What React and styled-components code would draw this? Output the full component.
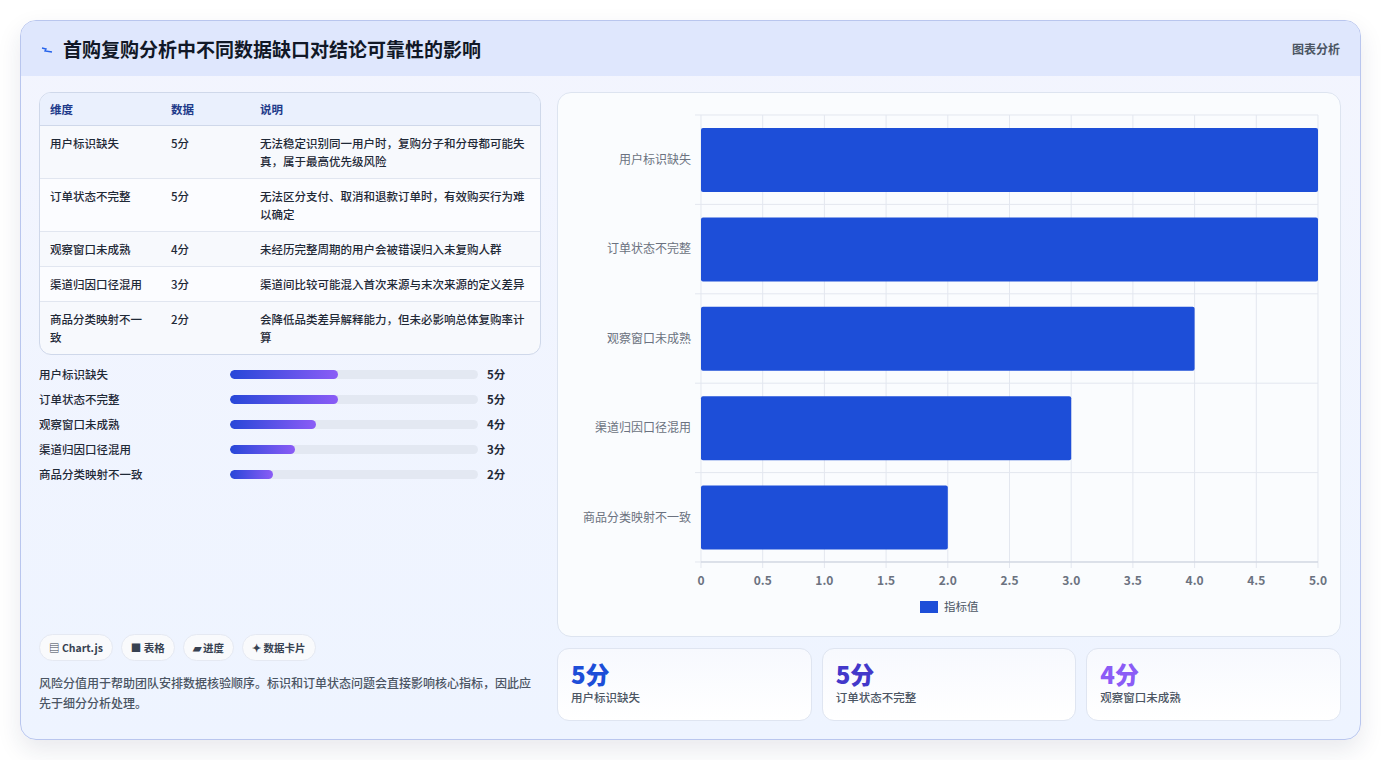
import React from "react";
import styled, { createGlobalStyle } from "styled-components";

const Global = createGlobalStyle`
  body { margin: 0; background: #fff; font-family: "Noto Sans CJK SC", "Noto Sans", sans-serif; }
`;

const rows = [
  { name: "用户标识缺失", score: 5, desc: "无法稳定识别同一用户时，复购分子和分母都可能失真，属于最高优先级风险" },
  { name: "订单状态不完整", score: 5, desc: "无法区分支付、取消和退款订单时，有效购买行为难以确定" },
  { name: "观察窗口未成熟", score: 4, desc: "未经历完整周期的用户会被错误归入未复购人群" },
  { name: "渠道归因口径混用", score: 3, desc: "渠道间比较可能混入首次来源与末次来源的定义差异" },
  { name: "商品分类映射不一致", score: 2, desc: "会降低品类差异解释能力，但未必影响总体复购率计算" },
];

const Page = styled.div`
  padding: 20px 20px 20px 20px;
`;
const Card = styled.div`
  height: 718px;
  border: 1px solid #b9c6ee;
  border-radius: 16px;
  background: linear-gradient(180deg, #f3f5fe, #eef4ff);
  box-shadow: 0 10px 24px rgba(30, 40, 80, 0.1);
  overflow: hidden;
  display: flex;
  flex-direction: column;
`;
const Header = styled.div`
  height: 56px;
  background: #dfe7fd;
  display: flex;
  align-items: center;
  justify-content: space-between;
  padding: 0 20px;
`;
const Title = styled.h1`
  margin: 0;
  font-size: 19px;
  font-weight: 700;
  color: #111827;
  display: flex;
  align-items: center;
  gap: 10px;
`;
const Tag = styled.span`
  font-size: 12px;
  color: #4b5563;
  font-weight: 600;
`;
const Body = styled.div`
  flex: 1;
  display: grid;
  grid-template-columns: 502px 784px;
  gap: 16px;
  padding: 16px 18px 18px 18px;
`;
const Left = styled.div`
  display: flex;
  flex-direction: column;
`;
const Table = styled.table`
  width: 100%;
  border-collapse: separate;
  border-spacing: 0;
  border: 1px solid #cfd8ea;
  border-radius: 12px;
  overflow: hidden;
  font-size: 11.5px;
  background: #f7f9fd;
  th {
    text-align: left;
    color: #1e3a8a;
    font-weight: 600;
    height: 32px;
    padding: 0 10px;
    background: #eaf0fd;
    border-bottom: 1px solid #cfd8ea;
  }
  td {
    padding: 8px 10px 8px 10px;
    color: #1f2937;
    line-height: 18px;
    vertical-align: top;
    border-bottom: 1px solid #e1e6f0;
    font-weight: 500;
  }
  tr:nth-child(even) td { background: #fbfcff; }
  tr:last-child td { border-bottom: none; }
`;
const Bars = styled.div`
  margin-top: 10px;
  display: flex;
  flex-direction: column;
  gap: 7px;
`;
const BarRow = styled.div`
  display: grid;
  grid-template-columns: 182px 248px auto;
  align-items: center;
  gap: 9px;
  font-size: 11.5px;
  color: #1f2937;
  font-weight: 500;
  height: 18px;
  b { font-weight: 700; }
`;
const Track = styled.div`
  height: 9px;
  border-radius: 5px;
  background: #e3e8f2;
  overflow: hidden;
`;
const Fill = styled.div`
  height: 100%;
  border-radius: 5px;
  background: linear-gradient(90deg, #2747d8, #8b5cf6);
`;
const Chips = styled.div`
  margin-top: auto;
  display: flex;
  gap: 8px;
`;
const Chip = styled.span`
  font-size: 10.5px;
  font-weight: 700;
  color: #374151;
  background: #f9fafc;
  border: 1px solid #e5e9f2;
  border-radius: 14px;
  padding: 5px 9px;
`;
const Note = styled.p`
  margin: 12px 0 8px;
  font-size: 12px;
  line-height: 20px;
  color: #4b5563;
  font-weight: 500;
`;
const Right = styled.div`
  display: flex;
  flex-direction: column;
  gap: 11px;
`;
const ChartCard = styled.div`
  height: 543px;
  border: 1px solid #dde4f0;
  border-radius: 14px;
  background: #fafcfe;
  svg { display: block; }
`;
const Stats = styled.div`
  display: grid;
  grid-template-columns: repeat(3, 1fr);
  gap: 10px;
`;
const Stat = styled.div`
  height: 73px;
  box-sizing: border-box;
  border: 1px solid #dfe5f1;
  border-radius: 12px;
  background: linear-gradient(180deg, #f7f9fe, #fff);
  padding: 10px 13px;
`;
const StatValue = styled.div`
  font-size: 24px;
  font-weight: 800;
  line-height: 30px;
  color: ${(p) => p.$color};
`;
const StatLabel = styled.div`
  font-size: 11.5px;
  color: #4b5563;
  font-weight: 500;
`;

const Chart = () => {
  const x0 = 143, w = 617, y0 = 22, rowH = 89.4;
  return (
    <svg width="784" height="543" fontFamily='"Noto Sans CJK SC", sans-serif'>
      {Array.from({ length: 11 }, (_, i) => (
        <g key={i}>
          <line x1={x0 + i * w / 10} x2={x0 + i * w / 10} y1={y0} y2={y0 + 5 * rowH + 6} stroke="#e3e7ef" />
          <text x={x0 + i * w / 10} y={492} textAnchor="middle" fontSize="12" fill="#6b7280" fontWeight="600">
            {i === 0 ? "0" : (i / 2).toFixed(1)}
          </text>
        </g>
      ))}
      {Array.from({ length: 6 }, (_, i) => (
        <line key={i} x1={x0 - 6} x2={x0 + w} y1={y0 + i * rowH} y2={y0 + i * rowH} stroke="#e3e7ef" />
      ))}
      <line x1={x0} x2={x0 + w} y1={y0 + 5 * rowH} y2={y0 + 5 * rowH} stroke="#c9cfdc" />
      {rows.map((r, i) => (
        <g key={r.name}>
          <rect x={x0} y={y0 + i * rowH + 13} width={(r.score / 5) * w} height={64} rx="2" fill="#1d4ed8" />
          <text x={x0 - 10} y={y0 + i * rowH + 49} textAnchor="end" fontSize="12" fill="#6b7280">{r.name}</text>
        </g>
      ))}
      <rect x={362} y={508} width={18} height={12} fill="#1d4ed8" />
      <text x={386} y={518} fontSize="11.5" fill="#4b5563">指标值</text>
    </svg>
  );
};

export default function App() {
  return (
    <Page>
      <Global />
      <Card>
        <Header>
          <Title>
            <svg width="12" height="12" viewBox="0 0 12 12"><path d="M1 5 L5 6 L4 8 L11 9" stroke="#2563eb" strokeWidth="1.4" fill="none" /></svg>
            首购复购分析中不同数据缺口对结论可靠性的影响
          </Title>
          <Tag>图表分析</Tag>
        </Header>
        <Body>
          <Left>
            <Table>
              <thead>
                <tr><th style={{ width: 101 }}>维度</th><th style={{ width: 69 }}>数据</th><th>说明</th></tr>
              </thead>
              <tbody>
                {rows.map((r) => (
                  <tr key={r.name}><td>{r.name}</td><td>{r.score}分</td><td>{r.desc}</td></tr>
                ))}
              </tbody>
            </Table>
            <Bars>
              {rows.map((r) => (
                <BarRow key={r.name}>
                  <span>{r.name}</span>
                  <Track><Fill style={{ width: `${r.score * 8.7}%` }} /></Track>
                  <b>{r.score}分</b>
                </BarRow>
              ))}
            </Bars>
            <Chips>
              <Chip>▤ Chart.js</Chip>
              <Chip>■ 表格</Chip>
              <Chip>▰ 进度</Chip>
              <Chip>✦ 数据卡片</Chip>
            </Chips>
            <Note>风险分值用于帮助团队安排数据核验顺序。标识和订单状态问题会直接影响核心指标，因此应先于细分分析处理。</Note>
          </Left>
          <Right>
            <ChartCard><Chart /></ChartCard>
            <Stats>
              <Stat><StatValue $color="#1d4ed8">5分</StatValue><StatLabel>用户标识缺失</StatLabel></Stat>
              <Stat><StatValue $color="#4338ca">5分</StatValue><StatLabel>订单状态不完整</StatLabel></Stat>
              <Stat><StatValue $color="#8b5cf6">4分</StatValue><StatLabel>观察窗口未成熟</StatLabel></Stat>
            </Stats>
          </Right>
        </Body>
      </Card>
    </Page>
  );
}
